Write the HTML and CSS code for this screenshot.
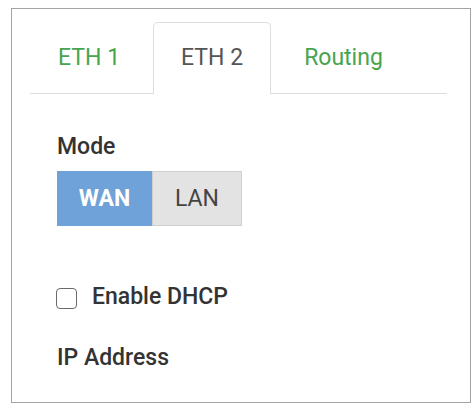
FILE: index.html
```html
<!DOCTYPE html>
<html lang="en">
<head>
    <meta charset="UTF-8">
    <meta name="viewport" content="width=device-width, initial-scale=1.0">
    <title>Network Settings</title>
    <link rel="stylesheet" href="styles.css">
</head>
<body>
    <div class="panel">
        <div class="tabs">
            <div class="tab">ETH 1</div>
            <div class="tab active">ETH 2</div>
            <div class="tab">Routing</div>
        </div>
        <div class="content">
            <div class="label">Mode</div>
            <div class="mode-group">
                <button type="button" class="mode-btn wan">WAN</button>
                <button type="button" class="mode-btn lan">LAN</button>
            </div>
            <label class="check-row">
                <input type="checkbox" class="check">
                <span>Enable DHCP</span>
            </label>
            <div class="label ip-label">IP Address</div>
        </div>
    </div>
</body>
</html>
```

FILE: styles.css
```css
body {
    margin: 0;
    background: #fff;
    font-family: Roboto, "Liberation Sans", Arial, sans-serif;
}

.panel {
    box-sizing: border-box;
    width: 460px;
    height: 395px;
    margin: 8px 0 0 11px;
    padding: 13px 23px 0 18px;
    border: 1px solid #a3a3a3;
}

.tabs {
    display: flex;
    gap: 5px;
    height: 71px;
    border-bottom: 1px solid #dedede;
}

.tab {
    box-sizing: border-box;
    height: 72px;
    padding: 21px 27px 0;
    border: 1px solid transparent;
    border-bottom: none;
    border-radius: 5px 5px 0 0;
    font-size: 23px;
    line-height: 27px;
    color: #47a44f;
}

.tab.active {
    border-color: #dedede;
    background: #fff;
    color: #555;
}

.content {
    padding-left: 27px;
}

.label {
    margin-top: 39px;
    font-size: 23px;
    line-height: 27px;
    font-weight: 500;
    color: #333;
}

.mode-group {
    display: flex;
    margin-top: 11px;
}

.mode-btn {
    box-sizing: border-box;
    height: 55px;
    margin: 0;
    border: none;
    font-family: Roboto, "Liberation Sans", Arial, sans-serif;
    font-size: 23px;
    cursor: pointer;
}

.wan {
    width: 95px;
    background: #6fa2d8;
    color: #fff;
    font-weight: 700;
}

.lan {
    width: 90px;
    background: #e3e3e3;
    border: 1px solid #cfcfcf;
    color: #444;
}

.check-row {
    display: flex;
    align-items: center;
    gap: 15px;
    margin-top: 57px;
    font-size: 23px;
    line-height: 27px;
    font-weight: 500;
    color: #333;
}

.check {
    appearance: none;
    box-sizing: border-box;
    width: 21px;
    height: 21px;
    margin: 3px 0 0 -1px;
    border: 1.5px solid #6a6a6a;
    border-radius: 4px;
    background: #fff;
}

.ip-label {
    margin-top: 34px;
}
```
